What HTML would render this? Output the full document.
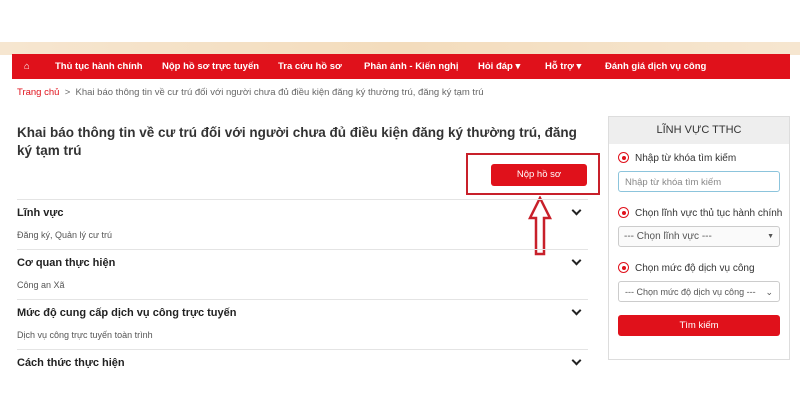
<!DOCTYPE html>
<html><head><meta charset="utf-8"><style>
*{box-sizing:border-box;margin:0;padding:0}
body{width:800px;height:420px;background:#fff;font-family:"Liberation Sans",sans-serif;position:relative;overflow:hidden;color:#333}
.a{position:absolute}
.band{left:0;top:42px;width:800px;height:13px;background:linear-gradient(90deg,#f6e6d0,#f3dcbc 50%,#f6e6d0)}
.nav{left:12px;top:54px;width:778px;height:25px;background:#e0111b;color:#fff;font-size:9.5px;font-weight:bold;display:flex;align-items:center}
.nav span{position:absolute;top:7px}
.bc{left:17px;top:87px;font-size:9.5px;color:#666}
.bc b{color:#e0111b;font-weight:normal}
h1{position:absolute;left:17px;top:124px;width:600px;font-size:13.5px;line-height:18px;font-weight:bold;color:#333}
.btn{background:#e0111b;color:#fff;font-size:9.5px;text-align:center;border-radius:3px}
.line{left:17px;width:571px;height:1px;background:#e4e4e4}
.t{left:17px;font-size:11px;font-weight:bold;color:#222}
.s{left:17px;font-size:9px;color:#555}
.chev{left:573px;width:7px;height:7px;border-right:2px solid #222;border-bottom:2px solid #222;transform:rotate(45deg)}
.side{left:608px;top:116px;width:182px;height:244px;border:1px solid #ddd}
.sh{left:609px;top:117px;width:180px;height:27px;background:#eee;font-size:11px;text-align:center;line-height:27px;color:#333}
.r{left:618px;font-size:10px;color:#333}
.r i{display:inline-block;width:11px;height:11px;border:1px solid #e0111b;border-radius:50%;vertical-align:-2px;margin-right:6px;position:relative}
.r i:after{content:"";position:absolute;left:2.5px;top:2.5px;width:4px;height:4px;border-radius:50%;background:#e0111b}
.in{left:618px;width:162px;height:21px;border:1px solid #ccc;border-radius:3px;font-size:9.5px;color:#555;padding:5px 6px;background:#fafafa}
</style></head><body>
<div class="a band"></div>
<div class="a nav">
<span style="left:12px">&#8962;</span>
<span style="left:43px">Thủ tục hành chính</span>
<span style="left:150px">Nộp hồ sơ trực tuyến</span>
<span style="left:266px">Tra cứu hồ sơ</span>
<span style="left:352px">Phản ánh - Kiến nghị</span>
<span style="left:466px">Hỏi đáp ▾</span>
<span style="left:533px">Hỗ trợ ▾</span>
<span style="left:593px">Đánh giá dịch vụ công</span>
</div>
<div class="a bc"><b>Trang chủ</b> &nbsp;&gt;&nbsp; Khai báo thông tin về cư trú đối với người chưa đủ điều kiện đăng ký thường trú, đăng ký tạm trú</div>
<h1>Khai báo thông tin về cư trú đối với người chưa đủ điều kiện đăng ký thường trú, đăng<br>ký tạm trú</h1>
<div class="a" style="left:466px;top:153px;width:134px;height:42px;border:2px solid #c8202a"></div>
<div class="a btn" style="left:491px;top:164px;width:96px;height:22px;line-height:22px">Nộp hồ sơ</div>
<svg class="a" style="left:528px;top:196px" width="24" height="62"><path d="M12 2 L22 22 L16 22 L16 58 L8 58 L8 22 L2 22 Z" fill="none" stroke="#c8202a" stroke-width="2.5"/></svg>
<div class="a line" style="top:199px"></div>
<div class="a t" style="top:207px">Lĩnh vực</div><div class="a chev" style="top:207px"></div>
<div class="a s" style="top:230px">Đăng ký, Quản lý cư trú</div>
<div class="a line" style="top:249px"></div>
<div class="a t" style="top:257px">Cơ quan thực hiện</div><div class="a chev" style="top:257px"></div>
<div class="a s" style="top:280px">Công an Xã</div>
<div class="a line" style="top:299px"></div>
<div class="a t" style="top:307px">Mức độ cung cấp dịch vụ công trực tuyến</div><div class="a chev" style="top:307px"></div>
<div class="a s" style="top:330px">Dịch vụ công trực tuyến toàn trình</div>
<div class="a line" style="top:349px"></div>
<div class="a t" style="top:357px">Cách thức thực hiện</div><div class="a chev" style="top:357px"></div>
<div class="a side"></div>
<div class="a sh">LĨNH VỰC TTHC</div>
<div class="a r" style="top:152px"><i></i>Nhập từ khóa tìm kiếm</div>
<div class="a in" style="top:171px;border-color:#8cc4dc;background:#fff;color:#888">Nhập từ khóa tìm kiếm</div>
<div class="a r" style="top:207px"><i></i>Chọn lĩnh vực thủ tục hành chính</div>
<div class="a in" style="top:226px;font-size:10px;padding:4px 5px">--- Chọn lĩnh vực ---<span style="float:right;font-size:7px;margin-top:2px">▼</span></div>
<div class="a r" style="top:262px"><i></i>Chọn mức độ dịch vụ công</div>
<div class="a in" style="top:281px;font-size:9px;background:#fff">--- Chọn mức độ dịch vụ công --- <span style="float:right">⌄</span></div>
<div class="a btn" style="left:618px;top:315px;width:162px;height:21px;line-height:21px">Tìm kiếm</div>
</body></html>
